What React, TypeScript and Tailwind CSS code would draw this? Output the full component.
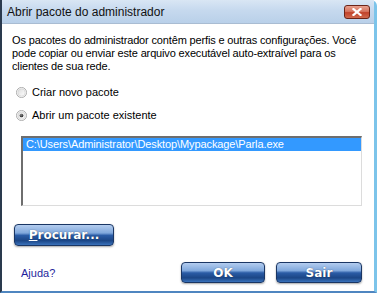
import React from "react";

const btn =
  "flex items-center justify-center rounded-[4px] border border-[#1a3664] text-white font-bold shadow-[0_1px_2px_rgba(0,0,0,0.35)] bg-[linear-gradient(to_bottom,#b4cdef_0%,#80a8dc_40%,#2a5ca6_52%,#1b4686_78%,#3a72bb_100%)] [text-shadow:0_0_1px_rgba(0,0,0,0.6)]";

function Radio({ checked }: { checked?: boolean }) {
  return (
    <svg width="11" height="11" viewBox="0 0 13 13">
      <defs>
        <linearGradient id="rg" x1="0" y1="0" x2="1" y2="1">
          <stop offset="0" stopColor="#dcdcdc" />
          <stop offset="1" stopColor="#ffffff" />
        </linearGradient>
        <radialGradient id="dot" cx="0.4" cy="0.35" r="0.7">
          <stop offset="0" stopColor="#8a8a8a" />
          <stop offset="1" stopColor="#1c1c1c" />
        </radialGradient>
      </defs>
      <circle cx="6.5" cy="6.5" r="6" fill="#f4f4f4" stroke="#a4a4a4" strokeWidth="1" />
      <circle cx="6.5" cy="6.5" r="4.3" fill="url(#rg)" stroke="#d4d4d4" strokeWidth="0.8" />
      {checked && <circle cx="6.5" cy="6.5" r="2.2" fill="url(#dot)" />}
    </svg>
  );
}

export default function App() {
  const bf = { fontFamily: '"DejaVu Sans", Verdana, sans-serif', fontSize: "12px" };
  return (
    <div className="w-[377px] h-[297px] bg-white overflow-hidden" style={{ fontFamily: '"Liberation Sans", Arial, sans-serif' }}>
      <div className="h-[293px] flex flex-col border-l-[2px] border-l-[#2a3a4e] border-r-[3px] border-r-[#7cc4ea] border-b-[2px] border-b-[#4f86c0] rounded-tr-[6px]">
        {/* title bar */}
        <div className="h-[23px] shrink-0 flex items-center justify-between pl-[5px] pr-[4px] bg-[linear-gradient(to_bottom,#d9e6f4_0%,#c6d9ee_45%,#b9d0e9_100%)]">
          <span className="text-[12px] text-[#111]" style={{ fontFamily: '"Liberation Sans", Arial, sans-serif' }}>
            Abrir pacote do administrador
          </span>
          <div className="w-[26px] h-[14px] mt-[1px] rounded-[3px] border border-[#6b2418] flex items-center justify-center bg-[linear-gradient(to_bottom,#e8a08e_0%,#d67560_45%,#c2432b_55%,#cf6a4e_100%)]">
            <svg width="10" height="8" viewBox="0 0 10 8">
              <path d="M1.5 1 L8.5 7 M8.5 1 L1.5 7" stroke="#ffffff" strokeWidth="2.2" strokeLinecap="square" />
            </svg>
          </div>
        </div>
        {/* content */}
        <div className="flex-1 flex flex-col bg-white border-t border-t-[#a9bcd2] pl-[10px] pr-[12px] text-[11px] text-black">
          <p className="mt-[10px] leading-[13px] tracking-[-0.15px]">
            Os pacotes do administrador contêm perfis e outras configurações. Você pode copiar ou enviar este arquivo executável auto-extraível para os clientes de sua rede.
          </p>
          <div className="mt-[11px] h-[16px] flex items-center pl-[4px] gap-[5px]">
            <Radio />
            <span>Criar novo pacote</span>
          </div>
          <div className="mt-[7px] h-[16px] flex items-center pl-[4px] gap-[5px]">
            <Radio checked />
            <span>Abrir um pacote existente</span>
          </div>
          <div className="mt-[13px] ml-[9px] h-[70px] w-[341px] border-t-2 border-l-2 border-t-[#6e6e6e] border-l-[#6e6e6e] border-r border-b border-r-[#dcdcdc] border-b-[#dcdcdc] bg-white">
            <div className="h-[13px] bg-[#3399ff] text-white leading-[13px] pl-[3px] tracking-[-0.1px]">
              C:\Users\Administrator\Desktop\Mypackage\Parla.exe
            </div>
          </div>
          <div className="mt-[18px] ml-[2px]">
            <button className={btn + " w-[100px] h-[22px]"} style={bf}>
              <span><span className="underline">P</span>rocurar...</span>
            </button>
          </div>
          <div className="mt-[16px] flex items-center">
            <span className="ml-[9px] text-[#1f1f9c] text-[11px] mt-[1px]">Ajuda?</span>
            <div className="ml-auto flex gap-[11px]">
              <button className={btn + " w-[84px] h-[21px]"} style={bf}>OK</button>
              <button className={btn + " w-[86px] h-[21px]"} style={bf}>Sair</button>
            </div>
          </div>
        </div>
      </div>
    </div>
  );
}
